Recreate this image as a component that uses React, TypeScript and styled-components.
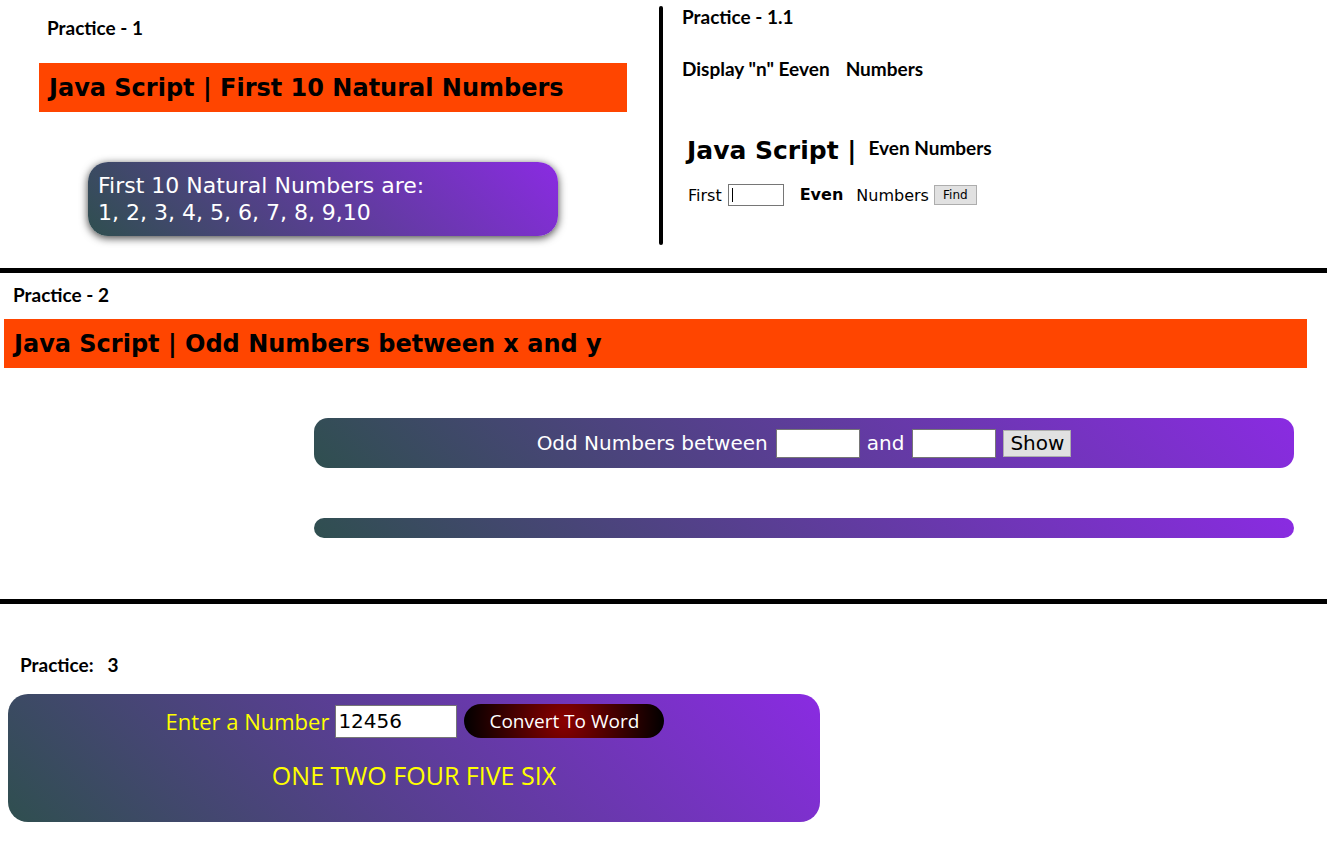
import React from "react";
import styled, { createGlobalStyle } from "styled-components";

const GlobalStyle = createGlobalStyle`
  html, body { margin: 0; padding: 0; background: #fff; }
  body { font-family: "DejaVu Sans", sans-serif; color: #000; }
`;

const TAHOMA = `"DejaVu Sans", "Liberation Sans", sans-serif`;
const CALIBRI = `Lato, "Open Sans", sans-serif`;
const COMIC = `"Comic Sans MS", "Open Sans", cursive`;
const GRADIENT = `linear-gradient(45deg, #2f4f4f, #8a2be2)`;

const Page = styled.div`
  width: 1327px;
  display: flex;
  flex-direction: column;
`;

const TopRow = styled.div`
  display: flex;
  height: 268px;
`;

const LeftPane = styled.div`
  width: 659px;
  display: flex;
  flex-direction: column;
  align-items: flex-start;
  padding-top: 18px;
  box-sizing: border-box;
`;

const VDivider = styled.div`
  width: 4px;
  height: 239px;
  margin-top: 6px;
  background: #000;
  border-radius: 2px;
`;

const RightPane = styled.div`
  flex: 1;
  display: flex;
  flex-direction: column;
  align-items: flex-start;
  padding: 7px 0 0 19px;
`;

const Label = styled.div<{ $left: number; $top: number }>`
  font-family: ${CALIBRI};
  font-weight: 700;
  font-size: 19px;
  line-height: 20px;
  margin-left: ${(p) => p.$left}px;
  margin-top: ${(p) => p.$top}px;
  white-space: pre;
`;

const Banner = styled.h1<{ $left: number; $width: number; $top: number }>`
  margin: ${(p) => p.$top}px 0 0 ${(p) => p.$left}px;
  width: ${(p) => p.$width}px;
  height: 49px;
  box-sizing: border-box;
  padding-left: 10px;
  display: flex;
  align-items: center;
  background: #ff4500;
  font-family: ${TAHOMA};
  font-weight: 700;
  font-size: 24px;
  color: #000;
`;

const ResultCard = styled.div`
  margin: 50px 0 0 88px;
  width: 470px;
  height: 74px;
  box-sizing: border-box;
  padding: 10px 10px 0;
  border-radius: 20px;
  background: ${GRADIENT};
  box-shadow: 0 2px 9px rgba(0, 0, 0, 0.75);
  color: #fff;
  font-family: ${TAHOMA};
  font-size: 22px;
  line-height: 27px;
`;

const SubTitle = styled.div`
  margin-top: 32px;
  font-family: ${CALIBRI};
  font-weight: 700;
  font-size: 19px;
  line-height: 20px;
  display: flex;
  gap: 16px;
`;

const HeadRow = styled.div`
  margin: 57px 0 0 5px;
  display: flex;
  align-items: baseline;
  gap: 12px;
`;

const HeadBig = styled.span`
  font-family: ${TAHOMA};
  font-weight: 700;
  font-size: 25px;
  line-height: 30px;
`;

const HeadSmall = styled.span`
  font-family: ${CALIBRI};
  font-weight: 700;
  font-size: 19px;
  position: relative;
  top: -4px;
`;

const FormRow = styled.div`
  margin: 18px 0 0 6px;
  display: flex;
  align-items: center;
  height: 22px;
  font-family: ${TAHOMA};
  font-size: 16px;
`;

const Word = styled.span<{ $bold?: boolean; $gap: number }>`
  font-weight: ${(p) => (p.$bold ? 700 : 400)};
  margin-left: ${(p) => p.$gap}px;
  position: relative;
  top: ${(p) => (p.$bold ? -1 : 0)}px;
`;

const CaretField = styled.span`
  position: relative;
  display: inline-flex;
  margin-left: 6px;
`;

const Caret = styled.span`
  position: absolute;
  left: 4px;
  top: 4px;
  width: 1px;
  height: 14px;
  background: #000;
`;

const SmallInput = styled.input`
  width: 56px;
  height: 22px;
  box-sizing: border-box;
  border: 1px solid #767676;
  border-radius: 0;
  padding: 0 2px;
  font-size: 13px;
  outline: none;
`;

const SmallButton = styled.button`
  margin-left: 5px;
  width: 43px;
  height: 20px;
  box-sizing: border-box;
  border: 1px solid #adadad;
  border-radius: 0;
  background: #e1e1e1;
  font-family: ${TAHOMA};
  font-size: 12px;
  padding: 0;
  color: #000;
`;

const Rule = styled.div<{ $top: number }>`
  margin-top: ${(p) => p.$top}px;
  height: 5px;
  background: #000;
`;

const Section = styled.div`
  display: flex;
  flex-direction: column;
  align-items: flex-start;
`;

const GradientBar = styled.div<{ $top: number; $height: number; $radius: number }>`
  margin: ${(p) => p.$top}px 0 0 314px;
  width: 980px;
  height: ${(p) => p.$height}px;
  border-radius: ${(p) => p.$radius}px;
  background: ${GRADIENT};
  display: flex;
  align-items: center;
  justify-content: center;
  gap: 7px;
  color: #fff;
  font-family: ${TAHOMA};
  font-size: 20px;
`;

const RangeInput = styled.input`
  width: 84px;
  height: 29px;
  box-sizing: border-box;
  border: 1px solid #767676;
  border-radius: 0;
  background: #fff;
  font-size: 18px;
  margin-left: 1px;
`;

const ShowButton = styled.button`
  height: 27px;
  width: 68px;
  box-sizing: border-box;
  border: 1px solid #adadad;
  border-radius: 0;
  background: #e1e1e1;
  font-family: ${TAHOMA};
  font-size: 20px;
  padding: 0;
  color: #000;
  line-height: 25px;
`;

const WordBox = styled.div`
  margin: 19px 0 0 8px;
  width: 812px;
  height: 128px;
  box-sizing: border-box;
  padding-top: 10px;
  border-radius: 20px;
  background: ${GRADIENT};
  display: flex;
  flex-direction: column;
  align-items: center;
`;

const WordRow = styled.div`
  display: flex;
  align-items: center;
  gap: 7px;
  margin-left: 2px;
`;

const YellowText = styled.span<{ $size: number }>`
  color: #ffff00;
  font-family: ${COMIC};
  font-size: ${(p) => p.$size}px;
`;

const NumberInput = styled.input`
  width: 122px;
  height: 33px;
  box-sizing: border-box;
  border: 1px solid #767676;
  border-radius: 0;
  background: #fff;
  font-family: ${TAHOMA};
  font-size: 20px;
  padding: 0 2px;
  color: #000;
  margin-left: -1px;
`;

const ConvertButton = styled.button`
  width: 200px;
  height: 34px;
  border: none;
  border-radius: 17px;
  background: radial-gradient(circle, #8b0000 0%, #000 100%);
  color: #fff;
  font-family: ${COMIC};
  font-size: 19px;
  padding: 0;
`;

const Output = styled.div`
  margin-top: 20px;
`;

export default function App() {
  return (
    <Page>
      <GlobalStyle />
      <TopRow>
        <LeftPane>
          <Label $left={47} $top={0}>Practice - 1</Label>
          <Banner $left={39} $width={588} $top={25}>
            Java Script | First 10 Natural Numbers
          </Banner>
          <ResultCard>
            First 10 Natural Numbers are:
            <br />
            1, 2, 3, 4, 5, 6, 7, 8, 9,10
          </ResultCard>
        </LeftPane>
        <VDivider />
        <RightPane>
          <Label $left={0} $top={0}>Practice - 1.1</Label>
          <SubTitle>
            <span>Display "n" Eeven</span>
            <span>Numbers</span>
          </SubTitle>
          <HeadRow>
            <HeadBig>Java Script |</HeadBig>
            <HeadSmall>Even Numbers</HeadSmall>
          </HeadRow>
          <FormRow>
            <Word $gap={0}>First</Word>
            <CaretField>
              <SmallInput defaultValue="" />
              <Caret />
            </CaretField>
            <Word $bold $gap={16}>Even</Word>
            <Word $gap={13}>Numbers</Word>
            <SmallButton>Find</SmallButton>
          </FormRow>
        </RightPane>
      </TopRow>
      <Rule $top={0} />
      <Section>
        <Label $left={13} $top={12}>Practice - 2</Label>
        <Banner $left={4} $width={1303} $top={14}>
          Java Script | Odd Numbers between x and y
        </Banner>
        <GradientBar $top={50} $height={50} $radius={14}>
          <span>Odd Numbers between</span>
          <RangeInput />
          <span>and</span>
          <RangeInput />
          <ShowButton>Show</ShowButton>
        </GradientBar>
        <GradientBar $top={50} $height={20} $radius={10} />
      </Section>
      <Rule $top={61} />
      <Section>
        <Label $left={20} $top={51}>{"Practice:   3"}</Label>
        <WordBox>
          <WordRow>
            <YellowText $size={22}>Enter a Number</YellowText>
            <NumberInput defaultValue="12456" />
            <ConvertButton>Convert To Word</ConvertButton>
          </WordRow>
          <Output>
            <YellowText $size={25}>ONE TWO FOUR FIVE SIX</YellowText>
          </Output>
        </WordBox>
      </Section>
    </Page>
  );
}
